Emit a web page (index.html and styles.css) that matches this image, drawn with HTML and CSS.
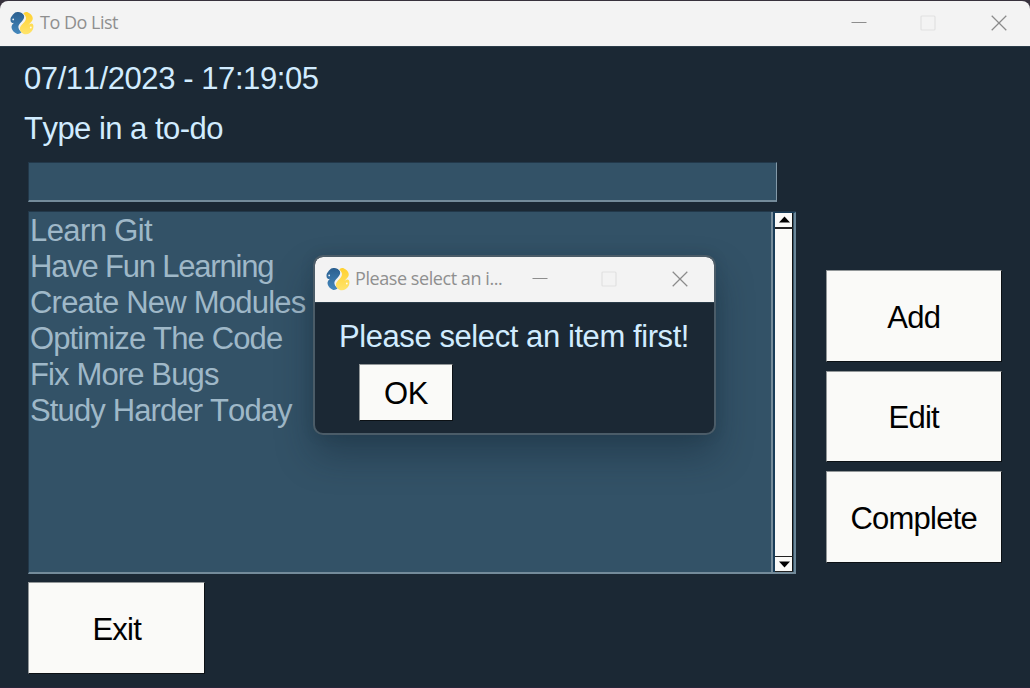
FILE: index.html
```html
<!DOCTYPE html>
<html lang="en">
<head>
<meta charset="utf-8">
<title>To Do List</title>
<link rel="stylesheet" href="styles.css">
</head>
<body>
<svg class="defs" width="0" height="0">
  <defs>
    <linearGradient id="blue" x1="0" y1="0" x2="0" y2="1"><stop offset="0" stop-color="#2b5f8f"/><stop offset="1" stop-color="#4488bd"/></linearGradient>
    <linearGradient id="yellow" x1="0" y1="0" x2="0" y2="1"><stop offset="0" stop-color="#ffd130"/><stop offset="1" stop-color="#ffe46c"/></linearGradient>
  </defs>
  <symbol id="snake" viewBox="0 0 24 24">
    <path fill="url(#blue)" d="M3 3.6C4.6 1.6 6 .9 7.7 1C10 .7 13.3 2.5 14 4.6C14.6 6.7 13.6 8.5 12 10.2L9.7 12.7C8.4 14.3 8.1 15.7 8.7 17.4C9.3 19.1 10.4 20 11.6 21.3C10 22.7 8.3 23.4 6.8 22.7C4.4 21.8 2.1 19.6 1.6 17C1.3 14.8 2 13.9 3.5 12.3L5.9 9.7C4.6 11.5 2.9 12.6 1.8 11.8C.1 10.8.2 7.6 1 6.3Z"/>
    <path fill="url(#yellow)" d="M13.3 2.4C14.7 1.2 16.5.8 18 1.4C20.6 2.4 22.4 4.7 22.7 6.7C23 8.7 22.2 9.8 20.9 11.2L17.6 14.9C19.3 12.9 21.5 11.6 22.7 13C23.9 14.5 23.5 17.2 22.7 18.7C21.5 21.2 18.5 23.4 15.8 23.3C13.3 23.2 10.5 21.2 10 18.7C9.5 16.6 10.5 15.2 12 13.5L14.4 11C16 9.2 16.3 7.4 15.6 5.6C15.1 4.2 14.4 3.3 13.3 2.4Z"/>
    <circle cx="3.2" cy="8.4" r=".9" fill="#eef2f5"/>
    <circle cx="20.8" cy="16.5" r=".9" fill="#fffbe6"/>
  </symbol>
  <symbol id="minimize" viewBox="0 0 16 16"><path d="M.5 7.5h15" stroke="#8d8d8d" fill="none"/></symbol>
  <symbol id="maximize" viewBox="0 0 16 16"><rect x="1" y="1" width="14" height="14" rx="1" stroke="#e1e1e1" stroke-width="1.2" fill="none"/></symbol>
  <symbol id="close" viewBox="0 0 16 16"><path d="M.7.7L15.3 15.3M15.3.7L.7 15.3" stroke="#8b8b8b" stroke-width="1.25" fill="none"/></symbol>
</svg>
<main class="window">
  <header class="titlebar">
    <svg class="logo"><use href="#snake"/></svg>
    <span class="title">To Do List</span>
    <div class="controls">
      <svg><use href="#minimize"/></svg><svg><use href="#maximize"/></svg><svg><use href="#close"/></svg>
    </div>
  </header>
  <div class="content">
    <div class="clock">07/11/2023 - 17:19:05</div>
    <div class="prompt">Type in a to-do</div>
    <div class="entry"></div>
    <div class="middle">
      <div class="listbox">
        <ul class="items">
          <li class="learn">Learn Git</li>
          <li class="fun">Have Fun Learning</li>
          <li class="modules">Create New Modules</li>
          <li>Optimize The Code</li>
          <li>Fix More Bugs</li>
          <li>Study Harder Today</li>
        </ul>
        <div class="scrollbar">
          <svg class="arrow up" viewBox="0 0 18 14"><path d="M9.5 3.5L15 9.5H4Z"/></svg>
          <svg class="arrow down" viewBox="0 0 18 14"><path d="M9.5 10.5L15 4.5H4Z"/></svg>
        </div>
      </div>
      <div class="actions">
        <div class="button">Add</div>
        <div class="button">Edit</div>
        <div class="button">Complete</div>
      </div>
    </div>
    <div class="button exit">Exit</div>
  </div>
</main>
<section class="dialog">
  <header class="titlebar">
    <svg class="logo"><use href="#snake"/></svg>
    <span class="title">Please select an i...</span>
    <div class="controls">
      <svg><use href="#minimize"/></svg><svg><use href="#maximize"/></svg><svg><use href="#close"/></svg>
    </div>
  </header>
  <div class="dialog-body">
    <div class="message">Please select an item first!</div>
    <div class="button ok">OK</div>
  </div>
</section>
</body>
</html>
```
FILE: styles.css
```css
* { box-sizing: border-box; }
body {
  margin: 0;
  background: #37313c;
  font: 31px/36px "Liberation Sans", Arial, sans-serif;
  font-kerning: none;
  overflow: hidden;
}
.defs { position: absolute; }
.window {
  width: 1030px;
  height: 688px;
  padding-top: 1px;
}
.titlebar {
  display: flex;
  align-items: center;
  height: 45px;
  background: #f3f3f3;
  border-radius: 8px 8px 0 0;
  padding: 0 24px 0 10px;
}
.logo { width: 24px; height: 24px; flex: none; margin-top: -2px; }
.title {
  font: 18px/24px "Open Sans", "Noto Sans", sans-serif;
  color: #8f8f8f;
  margin-left: 6px;
  margin-top: -3px;
  white-space: nowrap;
  letter-spacing: -0.5px;
}
.controls { display: flex; margin-left: auto; margin-top: -2px; }
.controls svg { width: 16px; height: 16px; }
.controls svg:nth-child(2) { margin-left: 53px; }
.controls svg:nth-child(3) { margin-left: 55px; }
.content {
  height: 642px;
  padding: 14px 28px 0;
  background: #1b2834;
  border-top: 1px solid #2b3c49;
  border-bottom: 1px solid #26263a;
}
.window > .titlebar { padding-right: 23.5px; }
.clock, .prompt { margin-left: -4px; color: #d1ecff; white-space: nowrap; }
.clock { letter-spacing: -0.42px; }
.prompt { margin-top: 14px; letter-spacing: -0.52px; }
.entry {
  width: 749px;
  height: 40px;
  margin-top: 15px;
  background: #335267;
  border: 1px solid;
  border-color: #22384a #8399a8 #8399a8 #22384a;
  border-bottom-width: 2px;
  border-bottom-color: #748b9a;
}
.middle { display: flex; margin-top: 9px; }
.listbox {
  display: flex;
  width: 768px;
  height: 363px;
  background: #335267;
  border-top: 1px solid #22384a;
  border-left: 1px solid #22384a;
  border-bottom: 2px solid #748b9a;
}
.items {
  flex: 1;
  list-style: none;
  margin: 0;
  padding: 1px 0 0 1px;
  color: #9fb8c8;
  letter-spacing: -0.87px;
  border-right: 2px solid #748b9a;
}
.learn { letter-spacing: -0.6px; }
.fun { letter-spacing: -1.2px; }
.modules { letter-spacing: -0.78px; }
.scrollbar {
  display: flex;
  flex-direction: column;
  justify-content: space-between;
  width: 23px;
  background: #fafaf8;
  border-left: 2px solid #183c58;
  border-right: 2px solid #6b8799;
  border-top: 1px solid #183c58;
  box-shadow: inset -1px 0 #335267, inset -2px 0 #111;
}
.arrow { width: 18px; fill: #000; }
.up { height: 16px; border-bottom: 2px solid #222; }
.down { height: 16px; border: solid #222; border-width: 1px 0; }
.actions { display: flex; flex-direction: column; gap: 9px; padding: 59.4px 0 0 30px; }
.button {
  display: flex;
  align-items: center;
  justify-content: center;
  width: 176.5px;
  height: 91.5px;
  padding-top: 3px;
  background: #fafaf8;
  color: #000;
  letter-spacing: -0.75px;
  border: 1px solid;
  border-color: #929799 #0c1115 #0c1115 #929799;
}
.exit { margin-top: 8.4px; padding-left: 1px; }
.dialog {
  position: absolute;
  left: 313px;
  top: 255px;
  width: 403px;
  height: 180px;
  border: 2px solid #4b5c68;
  border-radius: 10px;
  overflow: hidden;
  background: #1b2834;
  box-shadow: 0 20px 36px rgba(15, 30, 45, .36), 0 0 14px rgba(15, 30, 45, .12);
}
.dialog .titlebar { padding: 0 26px 0 11px; }
.dialog .title { margin-left: 5px; letter-spacing: -0.43px; }
.dialog-body { border-top: 1px solid #2b3c49; padding: 16px 24px; }
.message { color: #d1ecff; white-space: nowrap; letter-spacing: -0.42px; }
.ok { width: 94px; height: 57px; margin: 9px 0 0 20px; padding-top: 3px; letter-spacing: -0.3px; }
```
